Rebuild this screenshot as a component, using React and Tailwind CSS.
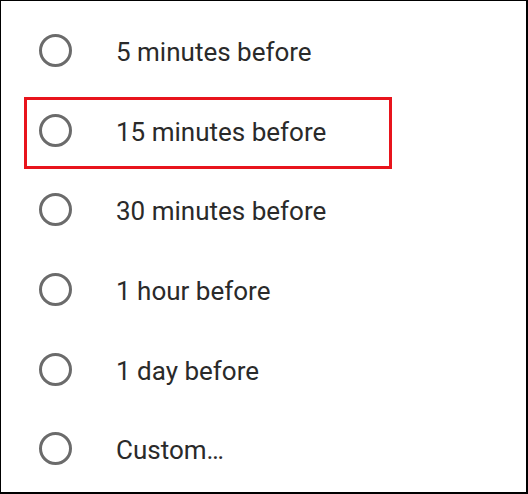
import React from "react";

const options = [
  "5 minutes before",
  "15 minutes before",
  "30 minutes before",
  "1 hour before",
  "1 day before",
  "Custom…",
];

function Radio() {
  return (
    <span className="block w-[33px] h-[33px] rounded-full border-[3px] border-[#6b6b6b] shrink-0" />
  );
}

export default function App() {
  return (
    <div className="w-[528px] h-[494px] bg-white border border-black border-r-2 border-b-2 pt-[10px] font-['Roboto',sans-serif]">
      {options.map((label, i) => (
        <div key={label} className="relative flex items-center h-[79.6px] pl-[38px]">
          {i === 1 && (
            <span className="absolute left-[23px] top-[6px] w-[368px] h-[72px] border-[3px] border-[#e8141c]" />
          )}
          <Radio />
          <span className="ml-[44px] mt-[3px] text-[26px] text-[#2a2a2a] leading-none">{label}</span>
        </div>
      ))}
    </div>
  );
}
